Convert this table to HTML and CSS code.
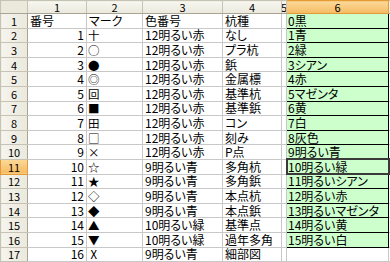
FILE: index.html
```html
<!DOCTYPE html>
<html lang="ja">
<head>
<meta charset="utf-8">
<link rel="stylesheet" href="styles.css">
</head>
<body>
<table class="sheet">
  <colgroup>
    <col class="w-h"><col class="w-1"><col class="w-2"><col class="w-3"><col class="w-4"><col class="w-5"><col class="w-6"><col class="w-7">
  </colgroup>
  <thead>
    <tr class="hdr">
      <th class="corner"></th><th>1</th><th>2</th><th>3</th><th>4</th><th class="narrow">5</th><th class="on">6</th><th></th>
    </tr>
  </thead>
  <tbody>
    <tr><th>1</th><td>番号</td><td>マーク</td><td>色番号</td><td>杭種</td><td></td><td class="g">0黒</td><td></td></tr>
    <tr><th>2</th><td class="n">1</td><td class="m">十</td><td>12明るい赤</td><td>なし</td><td></td><td class="g">1青</td><td></td></tr>
    <tr><th>3</th><td class="n">2</td><td class="m">○</td><td>12明るい赤</td><td>プラ杭</td><td></td><td class="g">2緑</td><td></td></tr>
    <tr><th>4</th><td class="n">3</td><td class="m">●</td><td>12明るい赤</td><td>鋲</td><td></td><td class="g">3シアン</td><td></td></tr>
    <tr><th>5</th><td class="n">4</td><td class="m">◎</td><td>12明るい赤</td><td>金属標</td><td></td><td class="g">4赤</td><td></td></tr>
    <tr><th>6</th><td class="n">5</td><td class="m">回</td><td>12明るい赤</td><td>基準杭</td><td></td><td class="g">5マゼンタ</td><td></td></tr>
    <tr><th>7</th><td class="n">6</td><td class="m">■</td><td>12明るい赤</td><td>基準鋲</td><td></td><td class="g">6黄</td><td></td></tr>
    <tr><th>8</th><td class="n">7</td><td class="m">田</td><td>12明るい赤</td><td>コン</td><td></td><td class="g">7白</td><td></td></tr>
    <tr><th>9</th><td class="n">8</td><td class="m">□</td><td>12明るい赤</td><td>刻み</td><td></td><td class="g">8灰色</td><td></td></tr>
    <tr><th>10</th><td class="n">9</td><td class="m">×</td><td>12明るい赤</td><td>P点</td><td></td><td class="g">9明るい青</td><td></td></tr>
    <tr><th class="on">11</th><td class="n">10</td><td class="m">☆</td><td>9明るい青</td><td>多角杭</td><td></td><td class="g sel">10明るい緑</td><td></td></tr>
    <tr><th>12</th><td class="n">11</td><td class="m">★</td><td>9明るい青</td><td>多角鋲</td><td></td><td class="g">11明るいシアン</td><td></td></tr>
    <tr><th>13</th><td class="n">12</td><td class="m">◇</td><td>9明るい青</td><td>本点杭</td><td></td><td class="g">12明るい赤</td><td></td></tr>
    <tr><th>14</th><td class="n">13</td><td class="m">◆</td><td>9明るい青</td><td>本点鋲</td><td></td><td class="g">13明るいマゼンタ</td><td></td></tr>
    <tr><th>15</th><td class="n">14</td><td class="m">▲</td><td>10明るい緑</td><td>基準点</td><td></td><td class="g">14明るい黄</td><td></td></tr>
    <tr><th>16</th><td class="n">15</td><td class="m">▼</td><td>10明るい緑</td><td>過年多角</td><td></td><td class="g">15明るい白</td><td></td></tr>
    <tr><th>17</th><td class="n">16</td><td class="m">Ⅹ</td><td>9明るい青</td><td>細部図</td><td></td><td></td><td></td></tr>
  </tbody>
</table>
</body>
</html>
```
FILE: styles.css
```css
html, body {
  margin: 0;
  padding: 0;
  overflow: hidden;
  background: #fff;
}

.sheet {
  border-collapse: collapse;
  table-layout: fixed;
  width: 390px;
  font-family: "Noto Sans CJK JP", "Noto Sans", sans-serif;
  font-size: 12px;
  font-feature-settings: "palt";
  color: #000;
}

.w-h { width: 27px; }
.w-1 { width: 59px; }
.w-2 { width: 56px; }
.w-3 { width: 80px; }
.w-4 { width: 59px; }
.w-5 { width: 5px; }
.w-6 { width: 102px; }
.w-7 { width: 2px; }

.sheet tr { height: 14.6px; }
.sheet tr.hdr { height: 13px; }

.sheet td {
  border: 1px solid #c8c8c8;
  padding: 0 1px 0 2px;
  line-height: 12px;
  height: 13.6px;
  white-space: nowrap;
  overflow: visible;
  vertical-align: middle;
}

.sheet td.n { text-align: right; padding-right: 2px; }
.sheet td.m { font-size: 11.5px; padding-left: 1px; }

.sheet td.g {
  background: #ccffcc;
  border: 1px solid #000;
  padding-left: 1px;
}

.sheet td.sel {
  outline: 2px solid #3a3a3a;
  outline-offset: -1px;
}

.sheet th {
  font-weight: normal;
  font-family: "Noto Sans CJK JP", "DejaVu Sans", sans-serif;
  font-size: 11px;
  line-height: 12px;
  padding: 0;
  color: #000;
  background: linear-gradient(#f7f6f0, #ebe9dc);
  border: 1px solid #c6c3b4;
  white-space: nowrap;
  overflow: hidden;
  vertical-align: middle;
}

.sheet thead th {
  height: 12px;
  border-bottom: 1px solid #a9a594;
  text-align: center;
}

.sheet thead th.narrow {
  text-align: left;
  text-indent: -1px;
}

.sheet tbody th {
  text-align: center;
  border-right: 1px solid #a9a594;
  background: linear-gradient(90deg, #f5f4ee, #ebe9dc);
}

.sheet th.corner {
  background: #ebe9dc;
}

.sheet th.on,
.sheet tbody th.on {
  background: linear-gradient(#fbd999, #f6bb63);
  border-color: #e59a38;
}
```
